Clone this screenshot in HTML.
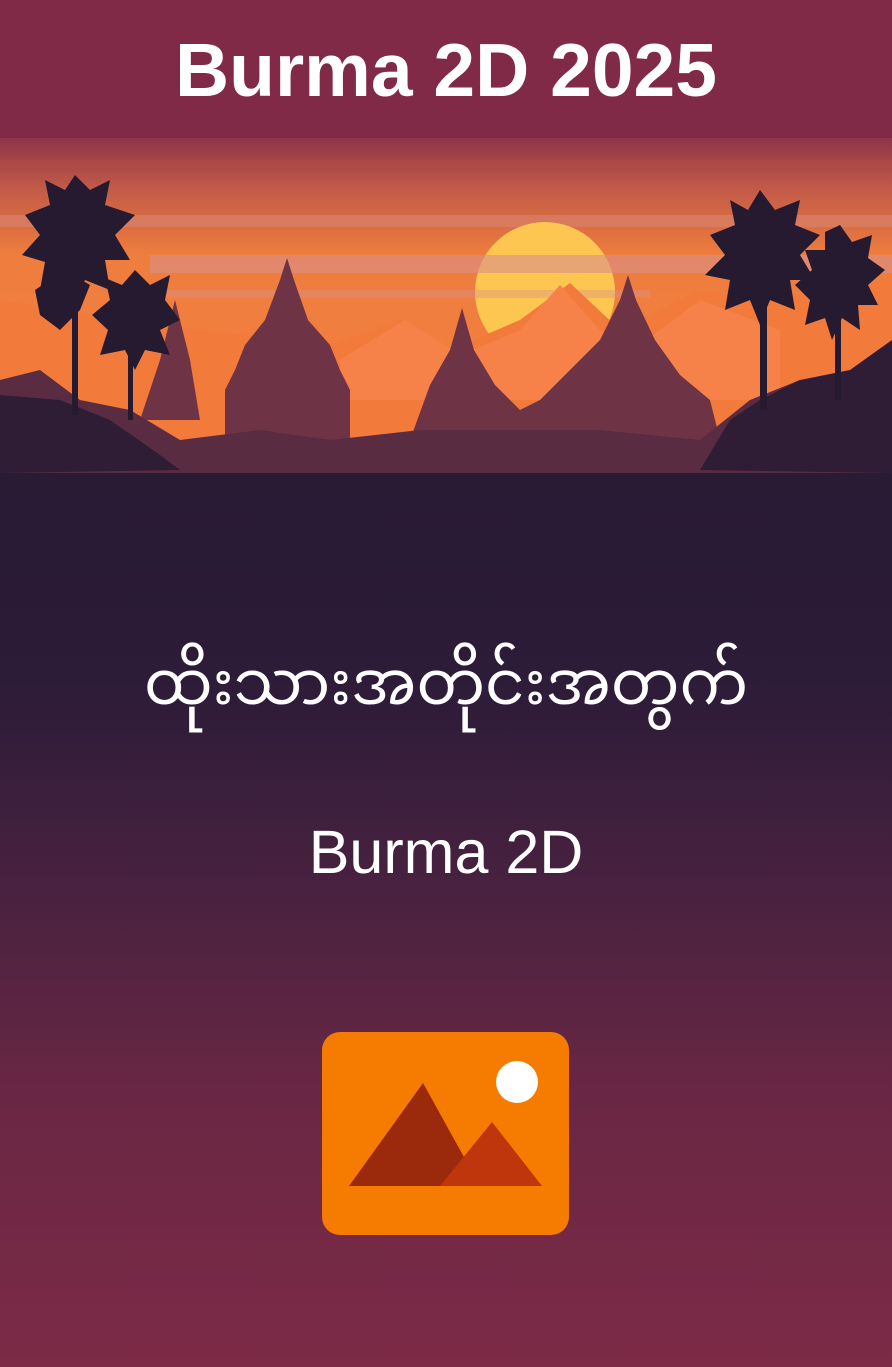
<!DOCTYPE html>
<html><head><meta charset="utf-8"><style>
html,body{margin:0;padding:0}
body{width:892px;height:1367px;overflow:hidden;position:relative;
background:linear-gradient(to bottom,#812a47 0px,#812a47 140px,#5a2540 300px,#2a1b35 470px,#291a35 560px,#2e1c38 700px,#4a2240 900px,#6a2744 1100px,#7c2a46 1367px);
font-family:"Liberation Sans",sans-serif;color:#fff}
.t{position:absolute;left:0;width:892px;text-align:center}
</style></head><body>
<div class="t" style="top:26px;font-size:75px;font-weight:bold;line-height:88px">Burma 2D 2025</div>
<svg style="position:absolute;left:0;top:138px" width="892" height="335" viewBox="0 138 892 335">
<defs><linearGradient id="sky" x1="0" y1="0" x2="0" y2="1">
<stop offset="0" stop-color="#8e3548"/><stop offset="0.15" stop-color="#c25a48"/><stop offset="0.35" stop-color="#ee7d3e"/><stop offset="1" stop-color="#f6813e"/></linearGradient></defs>
<rect x="0" y="138" width="892" height="335" fill="url(#sky)"/>
<rect x="0" y="160" width="892" height="12" fill="#b04d48" opacity="0.6"/>
<rect x="0" y="215" width="892" height="12" fill="#d88a7a" opacity="0.5"/>
<circle cx="545" cy="292" r="70" fill="#fcc651"/>
<rect x="150" y="255" width="742" height="18" fill="#d9908a" opacity="0.6"/>
<rect x="150" y="290" width="500" height="8" fill="#d9908a" opacity="0.4"/>
<path d="M0 300 L120 320 L200 330 L330 345 L400 320 L450 350 L520 320 L570 283 L620 330 L700 290 L760 300 L892 280 L892 473 L0 473Z" fill="#f27a3a"/>
<path d="M340 360 L405 320 L460 355 L520 330 L560 285 L600 330 L640 345 L700 300 L780 330 L780 400 L340 400Z" fill="#f6824a"/>
<path d="M140 420 L160 360 L175 300 L190 360 L200 420Z" fill="#6e3445"/>
<path d="M225 440 L225 390 L235 370 L245 345 L265 320 L280 280 L287 258 L294 280 L308 320 L330 345 L340 370 L350 390 L350 440Z" fill="#6e3445"/>
<path d="M410 440 L430 385 L450 350 L462 308 L474 350 L495 385 L520 410 L540 400 L570 370 L600 340 L620 300 L628 275 L636 300 L655 340 L680 375 L710 400 L720 440Z" fill="#6e3445"/>
<path d="M0 380 L40 370 L80 400 L130 410 L180 440 L260 430 L330 440 L420 430 L600 430 L700 440 L750 400 L800 380 L850 390 L892 370 L892 473 L0 473Z" fill="#5a2c42"/>
<path d="M0 395 L60 400 L110 420 L160 455 L180 470 L0 473Z" fill="#2e1d35"/>
<path d="M892 340 L850 370 L800 380 L760 400 L730 420 L700 470 L892 473Z" fill="#2e1d35"/>
<g fill="#261a30">
<rect x="72" y="220" width="6" height="195"/>
<path d="M75 175 L90 190 L110 180 L105 205 L135 215 L115 235 L130 260 L105 260 L110 290 L85 280 L75 300 L65 280 L40 290 L45 262 L22 255 L40 235 L25 215 L50 205 L45 180 L65 190Z"/>
<path d="M65 270 L90 285 L80 310 L60 330 L40 315 L35 290Z"/>
<rect x="128" y="330" width="5" height="90"/>
<path d="M135 270 L150 285 L170 275 L165 300 L180 320 L160 330 L170 355 L145 350 L135 370 L125 350 L100 355 L108 330 L92 315 L110 300 L105 278 L122 285Z"/>
<rect x="760" y="260" width="7" height="150"/>
<path d="M760 190 L775 210 L800 200 L795 225 L820 235 L800 255 L815 280 L790 280 L795 310 L770 300 L760 325 L750 300 L725 310 L730 280 L705 275 L725 255 L710 235 L735 225 L730 200 L748 210Z"/>
<rect x="835" y="280" width="6" height="120"/>
<path d="M840 225 L852 242 L872 235 L868 258 L885 270 L868 285 L878 305 L858 305 L860 330 L842 318 L832 340 L825 318 L805 325 L810 300 L795 285 L812 270 L805 250 L825 250 L825 232Z"/>
</g>
</svg>
<div class="t" style="top:640px;font-size:61px;line-height:86px;font-family:'Liberation Sans','Noto Sans Myanmar','Padauk',sans-serif">ထိုးသားအတိုင်းအတွက်</div>
<div class="t" style="top:816px;font-size:61px;line-height:72px">Burma 2D</div>
<svg style="position:absolute;left:322px;top:1032px" width="247" height="203" viewBox="0 0 247 203">
<rect width="247" height="203" rx="18" fill="#f57c00"/>
<circle cx="195" cy="50" r="21" fill="#fff"/>
<path d="M27 154 L101 51 L158 154Z" fill="#9b2a0c"/>
<path d="M118 154 L170 90 L220 154Z" fill="#bf360c"/>
</svg>
</body></html>
